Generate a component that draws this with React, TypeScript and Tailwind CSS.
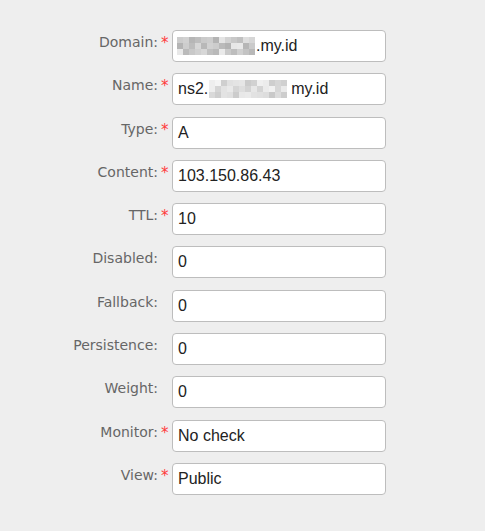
import React from 'react'

type Field = { label: string; value: React.ReactNode; required?: boolean }

function Blur({ cols, rows, seed, light }: { cols: number; rows: number; seed: number; light?: boolean }) {
  const cells: number[] = []
  let s = seed
  for (let i = 0; i < cols * rows; i++) {
    s = (s * 9301 + 49297) % 233280
    const r = s / 233280
    const base = light ? 200 : 175
    cells.push(Math.round(base + r * (light ? 45 : 60)))
  }
  return (
    <span
      className="inline-grid align-middle"
      style={{ gridTemplateColumns: `repeat(${cols}, 6px)`, gridTemplateRows: `repeat(${rows}, 6px)` }}
    >
      {cells.map((c, i) => (
        <span key={i} style={{ background: `rgb(${c},${c},${c})` }} />
      ))}
    </span>
  )
}

const fields: Field[] = [
  {
    label: 'Domain:',
    required: true,
    value: (
      <span className="flex items-center">
        <span className="-ml-[1px] mr-[1px] flex">
          <Blur cols={13} rows={3} seed={7} />
        </span>
        .my.id
      </span>
    ),
  },
  {
    label: 'Name:',
    required: true,
    value: (
      <span className="flex items-center">
        ns2.
        <span className="mx-[1px] flex">
          <Blur cols={13} rows={3} seed={41} light />
        </span>
        <span className="ml-[3px]">my.id</span>
      </span>
    ),
  },
  { label: 'Type:', required: true, value: 'A' },
  { label: 'Content:', required: true, value: '103.150.86.43' },
  { label: 'TTL:', required: true, value: '10' },
  { label: 'Disabled:', value: '0' },
  { label: 'Fallback:', value: '0' },
  { label: 'Persistence:', value: '0' },
  { label: 'Weight:', value: '0' },
  { label: 'Monitor:', required: true, value: 'No check' },
  { label: 'View:', required: true, value: 'Public' },
]

export default function App() {
  return (
    <div className="min-h-[531px] w-[485px] bg-[#eeeeee] pt-[30px]">
      <div className="flex flex-col gap-[11.3px]">
        {fields.map((f) => (
          <div key={f.label} className="flex items-start">
            <div
              className="w-[158px] pt-[4px] text-right text-[14px] leading-[16px] text-[#666666]"
              style={{ fontFamily: '"DejaVu Sans", sans-serif' }}
            >
              {f.label}
            </div>
            <div
              className="w-[14px] pl-[3px] pt-[5px] text-[15px] leading-[16px] text-[#ff3b3b]"
              style={{ fontFamily: '"DejaVu Sans", sans-serif' }}
            >
              {f.required ? '*' : ''}
            </div>
            <div
              className="flex h-[32px] w-[214px] items-center rounded-[4px] border border-[#bdbdbd] bg-white pl-[5px] text-[16px] text-[#222]"
              style={{ fontFamily: '"Liberation Sans", Arial, sans-serif' }}
            >
              {f.value}
            </div>
          </div>
        ))}
      </div>
    </div>
  )
}
